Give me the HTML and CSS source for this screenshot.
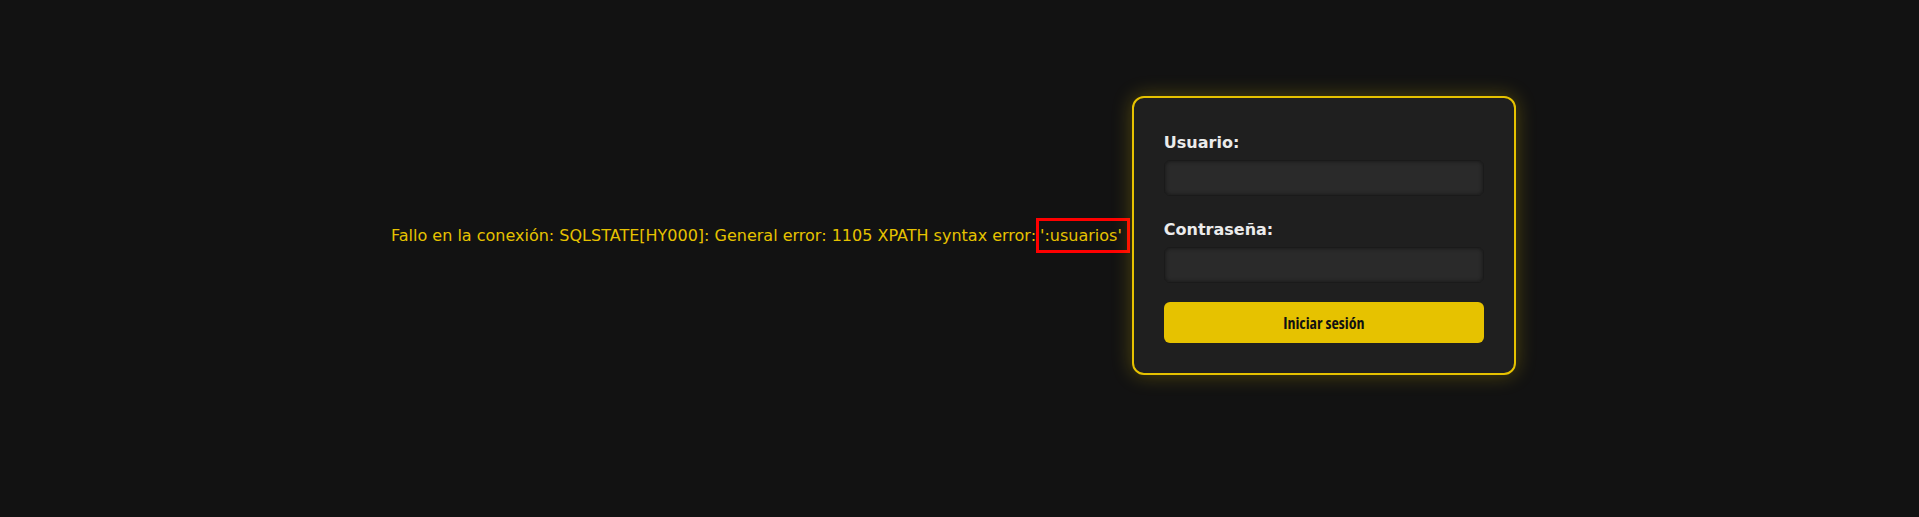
FILE: index.html
```html
<!DOCTYPE html>
<html lang="es">
<head>
<meta charset="utf-8">
<title>Login</title>
<link rel="stylesheet" href="styles.css">
</head>
<body>
<main class="page">
  <p class="error">Fallo en la conexión: SQLSTATE[HY000]: General error: 1105 XPATH syntax error:<span class="mark">':usuarios'</span></p>
  <form class="card">
    <label class="label" for="u">Usuario:</label>
    <input class="input" id="u" type="text">
    <label class="label second" for="p">Contraseña:</label>
    <input class="input" id="p" type="password">
    <button class="btn" type="button">Iniciar sesión</button>
  </form>
</main>
</body>
</html>
```
FILE: styles.css
```css
html, body {
  margin: 0;
  padding: 0;
  background: #121212;
}
body {
  font-family: "DejaVu Sans", sans-serif;
}
.page {
  height: 517px;
  box-sizing: border-box;
  padding: 0 0 46px 391px;
  display: flex;
  align-items: center;
  gap: 2px;
}
.error {
  margin: 0;
  color: #e6c200;
  font-size: 16px;
  white-space: nowrap;
}
.mark {
  border: 3px solid #ff0000;
  padding: 5px 5px 5px 1px;
}
.card {
  width: 384px;
  box-sizing: border-box;
  background: #1f1f1f;
  border: 2px solid #e6c200;
  border-radius: 12px;
  padding: 35px 30px 30px;
  box-shadow: 0 0 20px rgba(230, 194, 0, 0.3);
  display: flex;
  flex-direction: column;
}
.label {
  color: #ebebeb;
  font-weight: bold;
  font-size: 16px;
  line-height: 19px;
  margin-bottom: 8px;
}
.label.second {
  margin-top: 24px;
}
.input {
  height: 36px;
  box-sizing: border-box;
  background: #2a2a2a;
  border: 1px solid #1a1a1a;
  border-radius: 6px;
  box-shadow: inset 0 0 4px rgba(0, 0, 0, 0.5);
  outline: none;
  margin: 0;
}
.btn {
  margin-top: 19px;
  height: 41px;
  border: none;
  border-radius: 6px;
  background: #e6c200;
  color: #111;
  font-family: "Open Sans", sans-serif;
  font-stretch: 75%;
  font-weight: 700;
  font-size: 16px;
  padding: 0;
}
```
